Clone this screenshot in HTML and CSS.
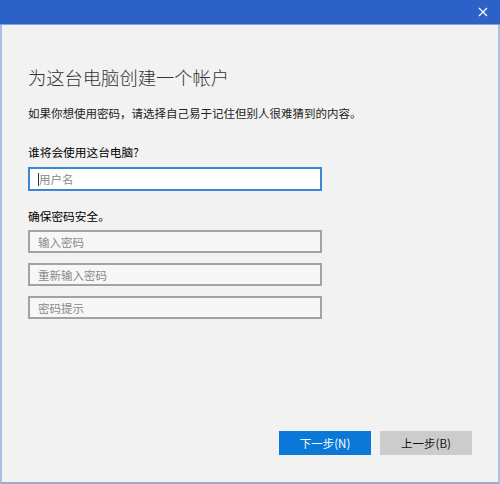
FILE: index.html
```html
<!DOCTYPE html>
<html lang="zh-CN">
<head>
<meta charset="utf-8">
<title>为这台电脑创建一个帐户</title>
<link rel="stylesheet" href="styles.css">
</head>
<body>
<div class="window">
  <div class="titlebar">
    <svg class="close" width="10" height="10" viewBox="0 0 10 10"><path d="M1 1L9 9M9 1L1 9" stroke="#ffffff" stroke-width="1.2" fill="none"/></svg>
  </div>
  <div class="content">
    <div class="title">为这台电脑创建一个帐户</div>
    <div class="subtitle">如果你想使用密码，请选择自己易于记住但别人很难猜到的内容。</div>
    <div class="label first">谁将会使用这台电脑?</div>
    <div class="input focused"><span class="caret"></span><span class="ph">用户名</span></div>
    <div class="label second">确保密码安全。</div>
    <div class="input pw"><span class="ph">输入密码</span></div>
    <div class="input pw"><span class="ph">重新输入密码</span></div>
    <div class="input pw"><span class="ph">密码提示</span></div>
    <div class="buttons">
      <div class="btn primary">下一步(N)</div>
      <div class="btn secondary">上一步(B)</div>
    </div>
  </div>
</div>
</body>
</html>
```
FILE: styles.css
```css
* { box-sizing: border-box; }
html, body { margin: 0; padding: 0; }
body {
  width: 500px;
  height: 484px;
  overflow: hidden;
  font-family: "Noto Sans CJK SC", "Microsoft YaHei", sans-serif;
  background: #f2f2f2;
}
.window {
  width: 500px;
  height: 484px;
  display: flex;
  flex-direction: column;
  border-left: 2px solid #a9bfe6;
  border-right: 2px solid #a9bfe6;
  border-bottom: 2px solid #a2aac4;
  background: #f2f2f2;
}
.titlebar {
  height: 25px;
  background: #2c62c8;
  border-bottom: 1px solid #7fa2e0;
  display: flex;
  align-items: center;
  justify-content: flex-end;
  padding-right: 12px;
  margin: 0 -2px;
}
.close { display: block; }
.content {
  flex: 1;
  display: flex;
  flex-direction: column;
  padding: 0 26px 27px 26px;
}
.title {
  margin-top: 40px;
  font-size: 18.3px;
  line-height: 24px;
  color: #333333;
  font-weight: 300;
}
.subtitle {
  margin-top: 16px;
  font-size: 11.5px;
  line-height: 16px;
  color: #222222;
}
.label {
  font-size: 11.7px;
  line-height: 16px;
  color: #000000;
  font-weight: 400;
}
.label.first { margin-top: 23px; }
.label.second { margin-top: 17px; }
.input {
  width: 294px;
  height: 23px;
  display: flex;
  align-items: center;
  padding-left: 8px;
  font-size: 11.5px;
}
.input.focused {
  margin-top: 7px;
  height: 24px;
  background: #ffffff;
  border: 2px solid #3a86d6;
}
.input.pw {
  margin-top: 10px;
  background: #f7f7f7;
  border: 2px solid #a3a3a3;
}
.label.second + .input.pw { margin-top: 6px; }
.caret {
  width: 1px;
  height: 13px;
  background: #333333;
}
.ph { color: #8a8a8a; }
.buttons {
  margin-top: auto;
  display: flex;
  justify-content: flex-end;
  gap: 9px;
}
.btn {
  width: 92px;
  height: 24px;
  display: flex;
  align-items: center;
  justify-content: center;
  font-size: 11.5px;
}
.btn.primary { background: #0b78d7; color: #ffffff; }
.btn.secondary { background: #cccccc; color: #111111; }
```
